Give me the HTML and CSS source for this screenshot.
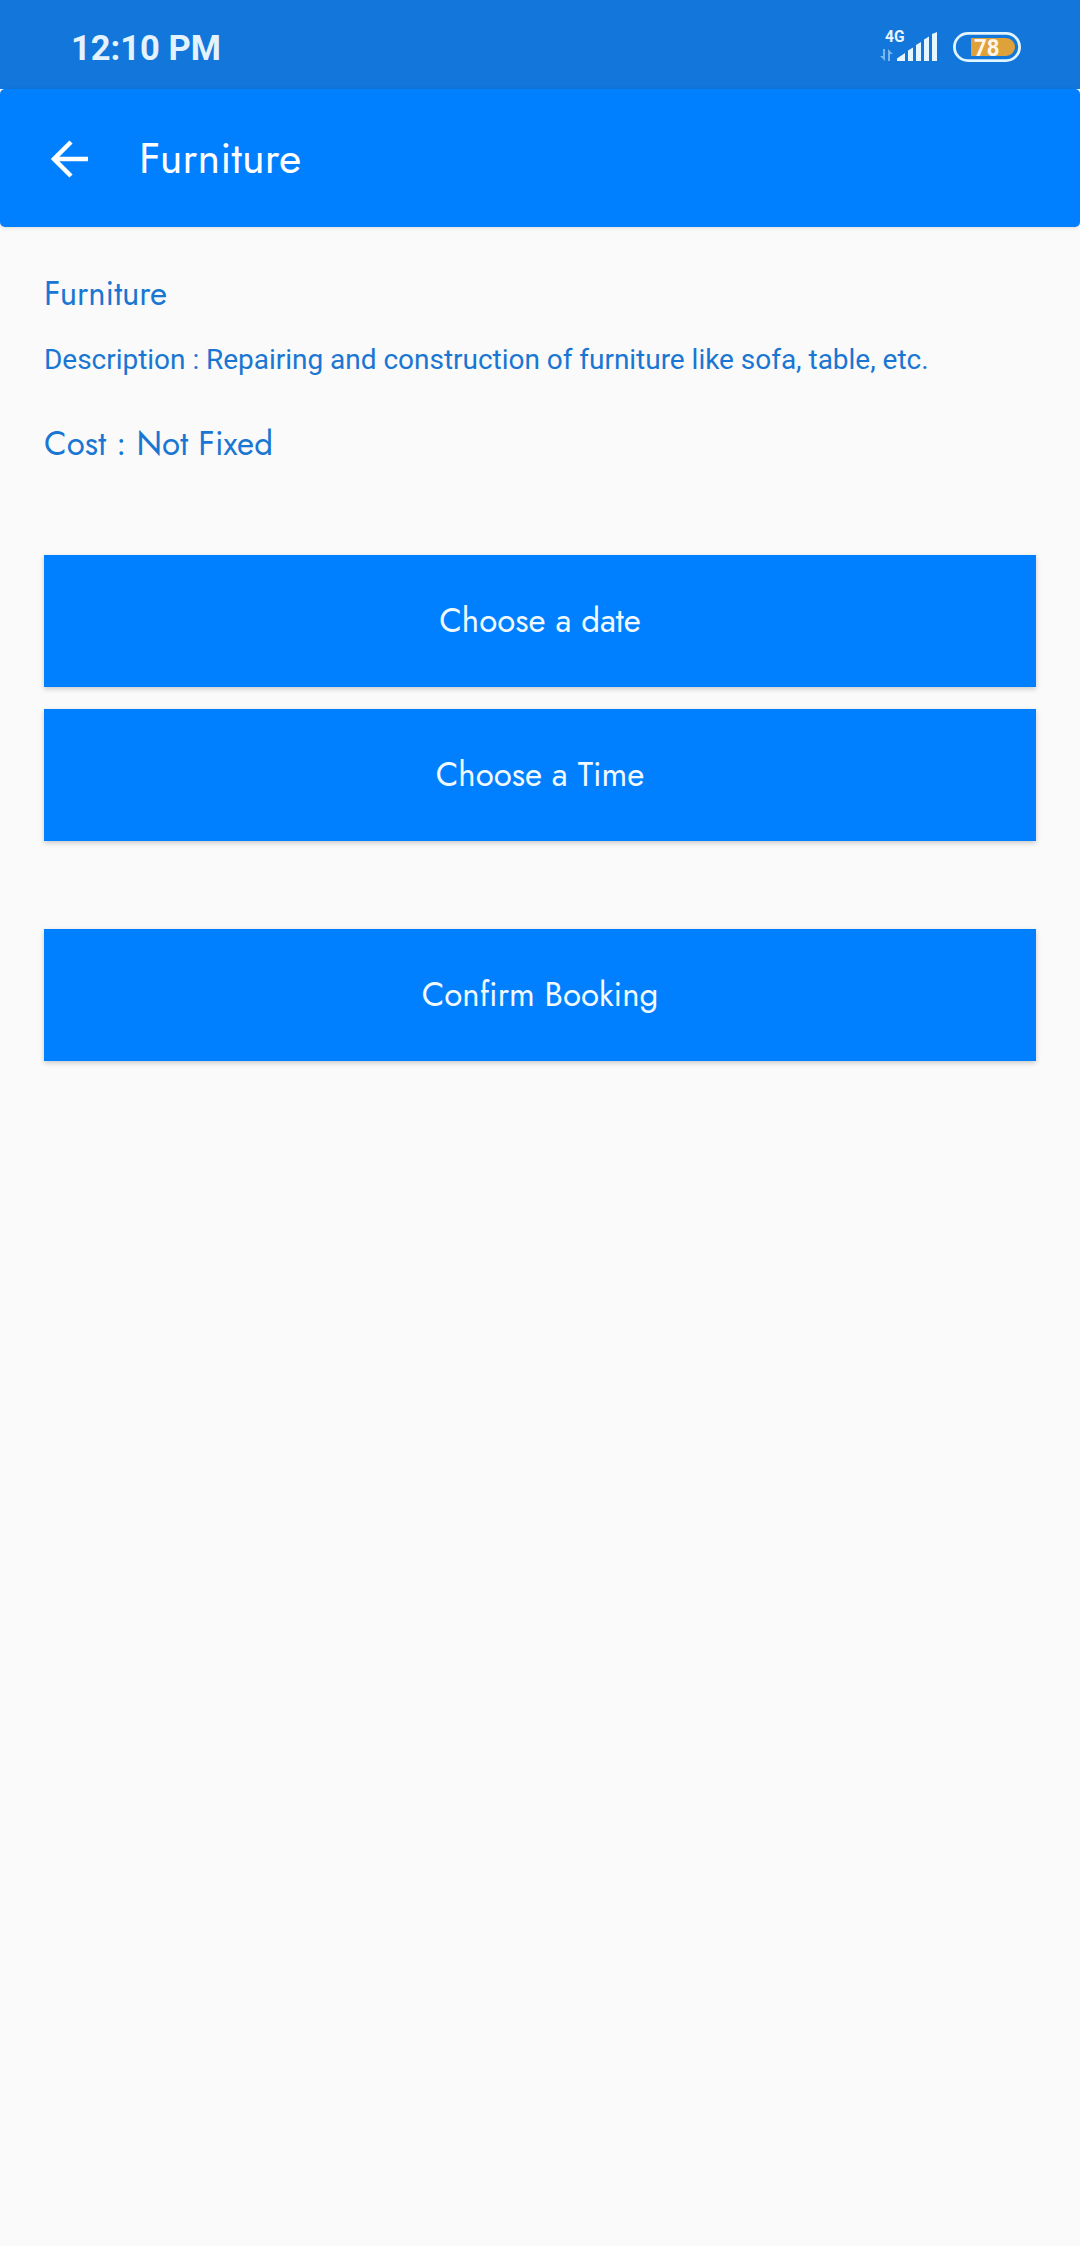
FILE: index.html
```html
<!DOCTYPE html>
<html lang="en">
<head>
<meta charset="utf-8">
<title>Furniture</title>
<link rel="stylesheet" href="styles.css">
</head>
<body>
<div class="status-bar">
  <span class="clock">12:10 PM</span>
  <svg class="status-icons" width="150" height="40" viewBox="876 27 150 40" aria-label="Signal and battery">
    <text class="network" x="885" y="41.5" textLength="19.500" lengthAdjust="spacingAndGlyphs">4G</text>
    <path class="traffic" d="M883 49h2v12l-5-5h3zM888 61V49l5 5h-3v7z"/>
    <path class="signal" d="M897 61v-2.500l8-5.500v8zM908 61V50.500l5-3V61zM916 61V45l5-3V61zM924 61V39.500l5-3V61zM932 61V34l5-2V61z"/>
    <rect class="battery-shell" x="954.400" y="33.400" width="65.200" height="27.200" rx="13.600"/>
    <path class="battery-fill" d="M972 38h34a9 9 0 0 1 0 18h-34a1 1 0 0 1-1-1V39a1 1 0 0 1 1-1z"/>
    <text class="battery-level" x="974" y="56" textLength="25.500" lengthAdjust="spacingAndGlyphs">78</text>
  </svg>
</div>
<header class="app-bar">
  <svg class="back" width="38" height="38" viewBox="0 0 38 38" aria-label="Back"><path d="M37 19H4M20 2 3 19l17 17"/></svg>
  <h1 class="title">Furniture</h1>
</header>
<main class="content">
  <h2 class="service">Furniture</h2>
  <p class="description">Description : Repairing and construction of furniture like sofa, table, etc.</p>
  <p class="cost">Cost : Not Fixed</p>
  <button class="button date">Choose a date</button>
  <button class="button time">Choose a Time</button>
  <button class="button confirm">Confirm Booking</button>
</main>
</body>
</html>
```
FILE: styles.css
```css
* { box-sizing: border-box; }
body {
  margin: 0;
  min-height: 2246px;
  background: #fafafa;
  color: #1976d2;
  font-family: Jost, Lato, sans-serif;
}
h1, h2, p { margin: 0; font-weight: 400; white-space: nowrap; }
.status-bar {
  display: flex;
  align-items: center;
  justify-content: space-between;
  height: 89px;
  padding: 5px 54px 0 71px;
  background: #1276db;
  color: #e3f2fd;
  font-family: Roboto, sans-serif;
}
.clock { padding-top: 1px; font-size: 34.500px; font-weight: 700; line-height: 40px; }
.status-icons { display: block; }
.network { font-size: 16px; font-weight: 700; fill: #e6f5ff; }
.traffic { fill: #79b5ee; }
.signal { fill: #e6f7ff; }
.battery-shell { fill: none; stroke: #e0f5ff; stroke-width: 2.800px; }
.battery-fill { fill: #dfa13a; }
.battery-level { font-size: 24.500px; font-weight: 700; fill: #fff5e8; }
.app-bar {
  display: flex;
  align-items: center;
  height: 138px;
  padding: 1px 0 0 51px;
  border-radius: 5px;
  background: #0080ff;
  color: #fff;
  box-shadow: 0 1px 4px rgba(0, 0, 0, .12);
}
.back { fill: none; stroke: #fff; stroke-width: 4.500px; }
.title { margin: 0 0 2px 50px; font-size: 43px; line-height: 52px; letter-spacing: .15px; }
.content { display: flex; flex-direction: column; padding: 45px 44px 0; }
.service { height: 44px; font-size: 33px; line-height: 44px; letter-spacing: -.05px; }
.description {
  height: 40px;
  margin-top: 24px;
  font-family: Roboto, sans-serif;
  font-size: 28px;
  line-height: 40px;
  letter-spacing: -.025px;
}
.cost { height: 44px; margin-top: 42px; font-size: 33px; line-height: 44px; letter-spacing: .12px; }
.button {
  height: 132px;
  padding: 0;
  border: 0;
  background: #0080ff;
  color: #f0faff;
  font: 400 33px/44px Jost, Lato, sans-serif;
  box-shadow: 0 2px 5px rgba(0, 0, 0, .2);
}
.date { margin-top: 89px; }
.time { margin-top: 22px; }
.confirm { margin-top: 88px; }
```
